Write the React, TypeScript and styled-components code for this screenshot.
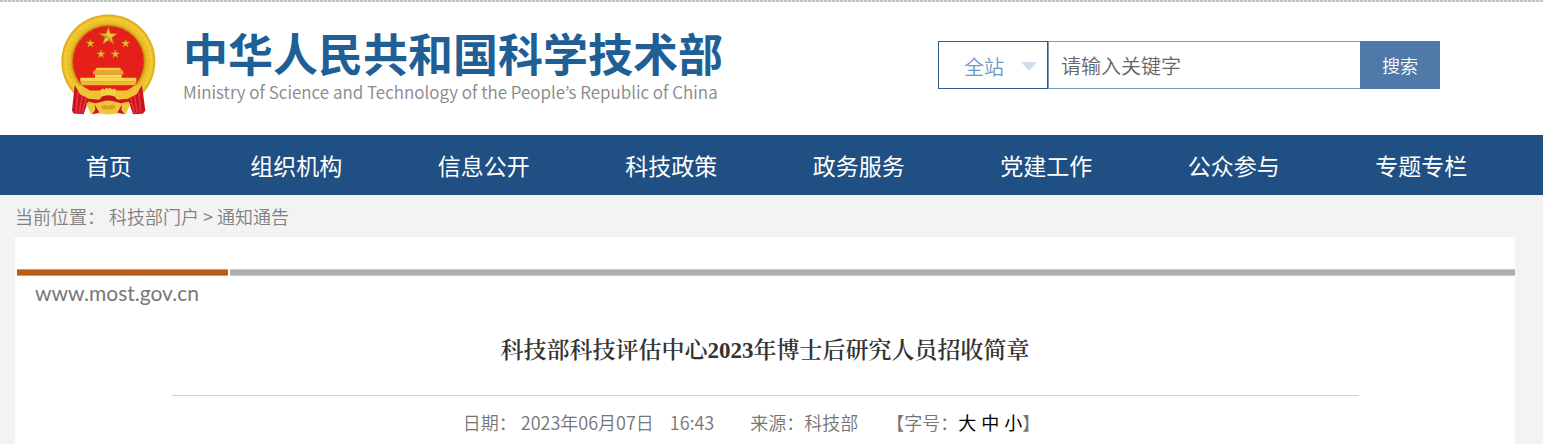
import React from 'react';
import styled, { createGlobalStyle } from 'styled-components';

const sans = `"Noto Sans CJK SC", sans-serif`;

const GlobalStyle = createGlobalStyle`
  *, *::before, *::after { box-sizing: border-box; }
  body { margin: 0; background: #f3f3f3; font-family: ${sans}; font-weight: 350; }
  a { color: inherit; text-decoration: none; }
`;

const TopRule = styled.div`
  height: 2px;
  background: repeating-linear-gradient(to right, #c4c4c4 0 3px, #ececec 3px 4px);
`;

const Header = styled.header`
  display: flex;
  justify-content: space-between;
  align-items: flex-start;
  background: #fff;
  padding: 0 103px 20px 61px;
`;

const Brand = styled.a`
  display: flex;
  gap: 27px;
  padding-top: 12px;
`;

const EmblemSvg = styled.svg`
  width: 95px;
  height: 101px;
  flex: none;
`;

const BrandText = styled.span`
  display: flex;
  flex-direction: column;
  gap: 2px;
  padding-top: 14px;
  white-space: nowrap;
`;

const BrandName = styled.span`
  font-size: 45px;
  line-height: 50px;
  font-weight: 700;
  color: #1f5f96;
`;

const BrandEnglish = styled.span`
  font-family: "Noto Sans CJK KR", sans-serif;
  font-size: 17px;
  line-height: 24px;
  font-weight: 350;
  color: #888;
`;

const Search = styled.form`
  display: flex;
  height: 48px;
  margin-top: 39px;
`;

const ScopeBox = styled.label`
  position: relative;
  display: block;
  width: 110px;
`;

const ScopeSelect = styled.select`
  appearance: none;
  width: 100%;
  height: 100%;
  padding: 2px 0 0 25px;
  border: 1px solid #2c5c90;
  border-radius: 0;
  background: #fff;
  color: #7096c4;
  font: 350 20px ${sans};
`;

const ScopeArrow = styled.svg`
  position: absolute;
  top: 21px;
  right: 11px;
  width: 16px;
  height: 9px;
  pointer-events: none;
`;

const SearchInput = styled.input`
  width: 312px;
  padding: 0 12px;
  border: 1px solid #7a9abf;
  border-right: 0;
  border-radius: 0;
  outline: 0;
  font: 350 20px ${sans};
  &::placeholder { color: #666; opacity: 1; }
`;

const SearchButton = styled.button`
  width: 80px;
  border: 0;
  background: #4f79a8;
  color: #fff;
  font: 350 18px ${sans};
`;

const Nav = styled.nav`
  display: grid;
  grid-template-columns: repeat(8, 1fr);
  padding: 0 28px 0 15px;
  background: #1f4f83;
`;

const NavLink = styled.a`
  color: #fff;
  font-size: 23px;
  font-weight: 400;
  line-height: 60px;
  text-align: center;
`;

const Breadcrumb = styled.nav`
  display: flex;
  gap: 4px;
  padding: 0 15px;
  color: #808080;
  font-size: 18px;
  line-height: 42px;
`;

const Article = styled.main`
  margin: 0 28px 0 15px;
  padding: 32px 0 10px;
  background: #fff;
`;

const Stripe = styled.div`
  display: flex;
  gap: 2px;
  height: 7px;
  padding-left: 2px;
`;

const StripeAccent = styled.span`
  width: 211px;
  border: solid #d39a6c;
  border-width: 1px 0;
  background: #bb5c14;
`;

const StripeRest = styled.span`
  flex: 1;
  border: solid #ccc;
  border-width: 1px 0;
  background: #aeaeae;
`;

const SiteUrl = styled.p`
  margin: 4px 0 0;
  padding-left: 20px;
  color: #777;
  font: 400 21px/26px Lato, sans-serif;
`;

const Title = styled.h1`
  margin: 29px 0 0;
  color: #333;
  font: 600 23px/32px "Liberation Serif", "Noto Serif CJK SC", "Noto Sans CJK SC", serif;
  text-align: center;
`;

const Meta = styled.div`
  display: flex;
  justify-content: center;
  margin: 28px 156px 0 157px;
  padding-right: 28px;
  border-top: 1px solid #d2d2d2;
  color: #757575;
  font-size: 18px;
  line-height: 52px;
  white-space: pre;
`;

const MetaItem = styled.span<{ $gap: number }>`
  margin-right: ${(p) => p.$gap}px;
`;

const SizeButton = styled.button`
  padding: 0;
  margin-right: 5px;
  border: 0;
  background: none;
  color: #000;
  font: 400 18px ${sans};
  &:last-of-type { margin-right: 0; }
`;

const navItems = ['首页', '组织机构', '信息公开', '科技政策', '政务服务', '党建工作', '公众参与', '专题专栏'];

function starPoints(cx: number, cy: number, r: number) {
  return Array.from({ length: 10 }, (_, i) => {
    const a = (Math.PI / 5) * i - Math.PI / 2;
    const d = i % 2 ? r * 0.4 : r;
    return `${(cx + d * Math.cos(a)).toFixed(1)},${(cy + d * Math.sin(a)).toFixed(1)}`;
  }).join(' ');
}

function Emblem() {
  return (
    <EmblemSvg viewBox="33 42 285 300" aria-hidden="true">
      <defs>
        <radialGradient id="gold" gradientUnits="userSpaceOnUse" cx="175" cy="183" r="141">
          <stop offset="0.75" stopColor="#c98c10" />
          <stop offset="0.82" stopColor="#edbd22" />
          <stop offset="0.92" stopColor="#f4cd3a" />
          <stop offset="1" stopColor="#dca514" />
        </radialGradient>
      </defs>
      <circle cx="175" cy="183" r="141" fill="url(#gold)" />
      <circle cx="175" cy="183" r="124" fill="none" stroke="#d9a21b" strokeWidth="9" strokeDasharray="5 9" opacity="0.25" />
      <circle cx="175" cy="183" r="107" fill="#e42019" stroke="#b87a12" strokeWidth="2" />
      <polygon points={starPoints(175, 108, 28)} fill="#f0c43b" stroke="#b4740f" strokeWidth="2" />
      <path d="M175 80v28l17 22-17-11zM175 108l-27-9 18 16z" fill="#a96d12" opacity="0.6" />
      {[[121, 129], [227, 129], [153, 161], [196, 161]].map(([x, y]) => (
        <polygon key={x} points={starPoints(x, y, 14)} fill="#e9b52f" stroke="#b4740f" strokeWidth="1" />
      ))}
      <path d="M140 202h70l6 9h-82z" fill="#f3cc46" />
      <path d="M130 211h90l1 11h-92z" fill="#e5a927" />
      <path d="M135 222h80v10h-80z" fill="#f8d95a" />
      <path d="M91 232h168v12H91z" fill="#f8d34e" />
      <path d="M91 244h168l-4 11H95z" fill="#eebb38" />
      <path d="M97 255h156l-26 23h-104z" fill="#e42019" />
      <path d="M74 254l-8 75 4 10 31 2 13-38 24 5 37-10 37 10 24-5 13 38 29-1 8-9-10-77-24 18-40 14-37-6-37 6-40-14z" fill="#c91420" />
      <path d="M84 272l-6 64M97 284l-9 53M108 292l-12 47M266 272l6 64M253 284l9 53M242 292l12 47" stroke="#e9333b" strokeWidth="5" fill="none" />
      <path d="M72 250l24 6 24 14 34 0 10 16-18 12-30-3-26-14zM278 250l-24 6-24 14-34 0-10 16 18 12 30-3 26-14z" fill="#f0c337" />
      <path d="M150 270l8-6 6 3 5-5 6 3 6-3 5 5 6-3 8 6-4 14-13 7h-16l-13-7z" fill="#f5cf45" />
      <path d="M152 290q23-12 46 0l-10 10h-26z" fill="#c91420" />
      <path d="M108 308l32 4 12-2 23-8 23 8 12 2 32-4-14 32h-31l-22 2-22-2h-31z" fill="#f1c63c" />
      <path d="M134 312l14 24-22 5 10-13zM216 312l-14 24 22 5-10-13z" fill="#c91420" />
      <path d="M152 318l11-6 12 4 12-4 11 6-7 9h-32z" fill="#df9f22" />
    </EmblemSvg>
  );
}

export default function App() {
  return (
    <>
      <GlobalStyle />
      <TopRule />
      <Header>
        <Brand href="#">
          <Emblem />
          <BrandText>
            <BrandName>中华人民共和国科学技术部</BrandName>
            <BrandEnglish>Ministry of Science and Technology of the People’s Republic of China</BrandEnglish>
          </BrandText>
        </Brand>
        <Search onSubmit={(e) => e.preventDefault()}>
          <ScopeBox>
            <ScopeSelect aria-label="搜索范围">
              <option>全站</option>
            </ScopeSelect>
            <ScopeArrow viewBox="0 0 16 9" aria-hidden="true">
              <path d="M0 0h16L8 9z" fill="#cddcee" />
            </ScopeArrow>
          </ScopeBox>
          <SearchInput type="text" aria-label="关键字" placeholder="请输入关键字" />
          <SearchButton type="submit">搜索</SearchButton>
        </Search>
      </Header>
      <Nav>
        {navItems.map((item) => (
          <NavLink key={item} href="#">{item}</NavLink>
        ))}
      </Nav>
      <Breadcrumb>
        <span>当前位置：</span>
        <a href="#">科技部门户</a>
        <span>&gt;</span>
        <a href="#">通知通告</a>
      </Breadcrumb>
      <Article>
        <Stripe>
          <StripeAccent />
          <StripeRest />
        </Stripe>
        <SiteUrl>www.most.gov.cn</SiteUrl>
        <Title>科技部科技评估中心2023年博士后研究人员招收简章</Title>
        <Meta>
          <MetaItem $gap={36}>日期： 2023年06月07日    16:43</MetaItem>
          <MetaItem $gap={28}>来源：科技部</MetaItem>
          <span>
            【字号：<SizeButton type="button">大</SizeButton>
            <SizeButton type="button">中</SizeButton>
            <SizeButton type="button">小</SizeButton>】
          </span>
        </Meta>
      </Article>
    </>
  );
}
